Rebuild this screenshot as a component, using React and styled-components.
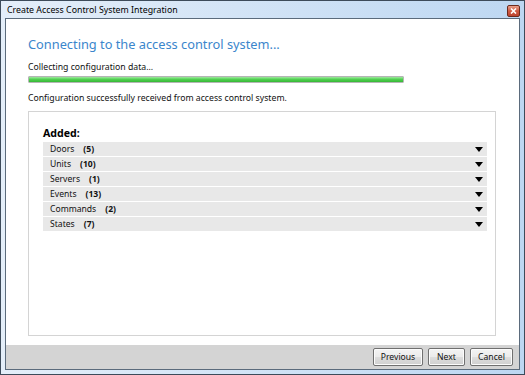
import React from "react";
import styled, { createGlobalStyle } from "styled-components";

const GlobalStyle = createGlobalStyle`
  html, body {
    margin: 0;
    padding: 0;
    background: #ffffff;
  }
  * {
    box-sizing: border-box;
  }
`;

const uiFont = `"Noto Sans", "Open Sans", "DejaVu Sans", sans-serif`;

const Window = styled.div`
  width: 525px;
  height: 375px;
  display: flex;
  flex-direction: column;
  border: 1px solid #3d4b5a;
  background: linear-gradient(to right, #e4eef9 0%, #d3e4f6 45%, #bdd7f2 100%);
  padding: 0 4px 4px 4px;
  font-family: ${uiFont};
  color: #111;
`;

const TitleBar = styled.div`
  height: 17px;
  display: flex;
  align-items: center;
  justify-content: space-between;
  padding-left: 2px;
`;

const Title = styled.span`
  font-size: 8.8px;
  color: #000;
  margin-top: 1px;
`;

const CloseButton = styled.div`
  width: 13px;
  height: 12px;
  margin-top: 3px;
  border: 1px solid #6b2a1e;
  border-radius: 2px;
  background: linear-gradient(to bottom, #e8a08c 0%, #cf5a42 50%, #bb4430 100%);
  display: flex;
  align-items: center;
  justify-content: center;
`;

const Client = styled.div`
  flex: 1;
  display: flex;
  flex-direction: column;
  border: 1px solid #5b6b7c;
  background: #ffffff;
`;

const Content = styled.div`
  flex: 1;
  display: flex;
  flex-direction: column;
  padding: 14px 22px 9px 22px;
`;

const Heading = styled.h1`
  margin: 0;
  font-size: 12.8px;
  font-weight: 400;
  color: #3b86cc;
  line-height: 22px;
`;

const StatusText = styled.p`
  margin: ${(p) => p.$top || 0}px 0 0 0;
  font-size: 8.7px;
  line-height: 15px;
  color: #111;
`;

const Progress = styled.div`
  width: 376px;
  height: 7px;
  margin-top: 1px;
  border: 1px solid #b5b5b5;
  border-radius: 1px;
  background: #e6e6e6;
  overflow: hidden;
`;

const ProgressFill = styled.div`
  height: 100%;
  background: linear-gradient(to bottom, #9ce99c 0%, #4fcf4f 50%, #36b736 100%);
`;

const Panel = styled.div`
  flex: 1;
  margin-top: 5px;
  margin-right: 1px;
  border: 1px solid #d4d4d4;
  padding: 14px 8px 0 14px;
`;

const PanelTitle = styled.div`
  font-size: 10.6px;
  font-weight: 700;
  line-height: 15px;
  margin-bottom: 1px;
  color: #000;
`;

const List = styled.div`
  display: flex;
  flex-direction: column;
  gap: 1px;
`;

const Row = styled.div`
  height: 14px;
  display: flex;
  align-items: center;
  background: #e8e8e8;
  padding: 0 4px 0 7px;
  font-size: 8.6px;
  color: #111;
`;

const RowName = styled.span`
  margin-right: 9px;
`;

const RowCount = styled.span`
  font-weight: 700;
  flex: 1;
`;

const Footer = styled.div`
  height: 24px;
  display: flex;
  align-items: center;
  justify-content: flex-end;
  gap: 5px;
  padding-right: 6px;
  background: #d4d4d4;
`;

const Button = styled.button`
  height: 18px;
  width: ${(p) => p.$w}px;
  padding: 0;
  font-family: ${uiFont};
  font-size: 8.6px;
  color: #111;
  border: 1px solid #707070;
  border-radius: 2px;
  background: linear-gradient(to bottom, #f4f4f4 0%, #ebebeb 48%, #dddddd 52%, #d0d0d0 100%);
  box-shadow: inset 0 0 0 1px #fcfcfc;
`;

const Arrow = () => (
  <svg width="8" height="5" viewBox="0 0 8 5">
    <path d="M0 0 H8 L4 5 Z" fill="#000" />
  </svg>
);

const items = [
  { name: "Doors", count: 5 },
  { name: "Units", count: 10 },
  { name: "Servers", count: 1 },
  { name: "Events", count: 13 },
  { name: "Commands", count: 2 },
  { name: "States", count: 7 },
];

export default function App() {
  return (
    <>
      <GlobalStyle />
      <Window>
        <TitleBar>
          <Title>Create Access Control System Integration</Title>
          <CloseButton>
            <svg width="7" height="6" viewBox="0 0 7 6">
              <path d="M1 0.5 L6 5.5 M6 0.5 L1 5.5" stroke="#fff" strokeWidth="1.6" />
            </svg>
          </CloseButton>
        </TitleBar>
        <Client>
          <Content>
            <Heading>Connecting to the access control system...</Heading>
            <StatusText $top={5}>Collecting configuration data...</StatusText>
            <Progress>
              <ProgressFill style={{ width: "100%" }} />
            </Progress>
            <StatusText $top={8}>
              Configuration successfully received from access control system.
            </StatusText>
            <Panel>
              <PanelTitle>Added:</PanelTitle>
              <List>
                {items.map((item) => (
                  <Row key={item.name}>
                    <RowName>{item.name}</RowName>
                    <RowCount>({item.count})</RowCount>
                    <Arrow />
                  </Row>
                ))}
              </List>
            </Panel>
          </Content>
          <Footer>
            <Button $w={50}>Previous</Button>
            <Button $w={37}>Next</Button>
            <Button $w={43}>Cancel</Button>
          </Footer>
        </Client>
      </Window>
    </>
  );
}
